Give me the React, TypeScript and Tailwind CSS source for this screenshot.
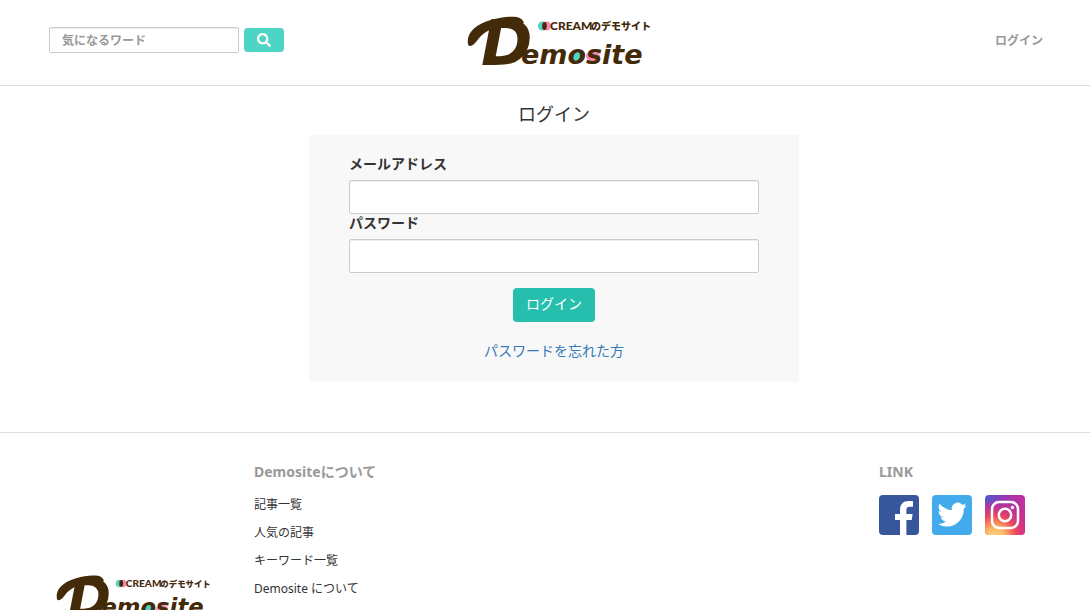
import { useState } from 'react'
import type { FormEvent } from 'react'
import { FaSearch } from 'react-icons/fa'

const aboutLinks = ['記事一覧', '人気の記事', 'キーワード一覧', 'Demosite について']

function Logo({ className }: { className: string }) {
  return (
    <svg viewBox="0 0 183 50" className={className} role="img" aria-label="Demosite" fill="#432a09">
      {/* swash over the initial */}
      <path d="M1 28 C-1 17 9 8 24 4 C33 1 42 0 50 1 C54 2 56 4 57 7 L36 10 C25 12 18 16 14 20 C10 24 7 30 3 30 Q1 30 1 28Z" />
      <text x="14" y="49" fontFamily="'DejaVu Sans', sans-serif" fontSize="62" fontWeight="700" fontStyle="italic">
        D
      </text>
      <ellipse cx="109" cy="40" rx="6" ry="5" fill="#4fd5c5" />
      <ellipse cx="126" cy="40" rx="7" ry="5" fill="#ff85b3" />
      <text x="54" y="48" fontFamily="'DejaVu Sans', sans-serif" fontSize="27" fontWeight="700" fontStyle="italic">
        emosite
      </text>
      <circle cx="75.500" cy="10" r="4.500" fill="#4fd5c5" />
      <circle cx="79.500" cy="10" r="4.500" fill="#ff85b3" />
      <ellipse cx="77.500" cy="10" rx="2.300" ry="4" />
      <text x="83" y="14" fontFamily="Lato, sans-serif" fontSize="12" fontWeight="900">
        CREAM
      </text>
      <text x="124" y="14" fontFamily="'Noto Sans CJK JP', sans-serif" fontSize="10" fontWeight="900">
        のデモサイト
      </text>
    </svg>
  )
}

function FacebookIcon() {
  return (
    <svg viewBox="0 0 40 40" className="size-10">
      <rect width="40" height="40" rx="4" fill="#38569b" />
      <path d="M21 40V25h-5v-6h5v-4c0-6 3.500-9 8.500-9 2 0 3.500.1 4.500.3v5.400h-3.300c-2.700 0-3.300 1.400-3.300 3.400V19h6.200l-.9 6h-5.300v15z" fill="#fff" />
    </svg>
  )
}

function TwitterIcon() {
  return (
    <svg viewBox="0 0 40 40" className="size-10">
      <rect width="40" height="40" rx="4" fill="#43abeb" />
      <g transform="translate(5.500 5) scale(1.220)">
        <path
          d="M23.953 4.570a10 10 0 01-2.825.775 4.958 4.958 0 002.163-2.723c-.951.555-2.005.959-3.127 1.184a4.920 4.920 0 00-8.384 4.482C7.690 8.095 4.067 6.130 1.640 3.162a4.822 4.822 0 00-.666 2.475c0 1.710.87 3.213 2.188 4.096a4.904 4.904 0 01-2.228-.616v.06a4.923 4.923 0 003.946 4.827 4.996 4.996 0 01-2.212.085 4.936 4.936 0 004.604 3.417 9.867 9.867 0 01-6.102 2.105c-.39 0-.779-.023-1.170-.067a13.995 13.995 0 007.557 2.209c9.053 0 13.998-7.496 13.998-13.985 0-.21 0-.42-.015-.63A9.935 9.935 0 0024 4.590z"
          fill="#fff"
        />
      </g>
    </svg>
  )
}

function InstagramIcon() {
  return (
    <svg viewBox="0 0 40 40" className="size-10">
      <defs>
        <linearGradient id="ig-base" x1="0" y1="0" x2="1" y2="0.300">
          <stop offset="0" stopColor="#4f5bd0" />
          <stop offset="0.500" stopColor="#9a37b4" />
          <stop offset="1" stopColor="#c92f96" />
        </linearGradient>
        <radialGradient id="ig-glow" cx="0.250" cy="1.050" r="0.950">
          <stop offset="0" stopColor="#ffd879" />
          <stop offset="0.250" stopColor="#fdb768" />
          <stop offset="0.550" stopColor="#ee4a58" />
          <stop offset="0.800" stopColor="#d33282" stopOpacity="0.700" />
          <stop offset="1" stopColor="#c92f96" stopOpacity="0" />
        </radialGradient>
      </defs>
      <rect width="40" height="40" rx="4" fill="url(#ig-base)" />
      <rect width="40" height="40" rx="4" fill="url(#ig-glow)" />
      <rect x="7" y="7" width="26" height="26" rx="7" fill="none" stroke="#fff" strokeWidth="2.500" />
      <circle cx="20" cy="20" r="6.200" fill="none" stroke="#fff" strokeWidth="2.500" />
      <circle cx="27.500" cy="12.500" r="1.700" fill="#fff" />
    </svg>
  )
}

const socialLinks = [
  { name: 'Facebook', Icon: FacebookIcon },
  { name: 'Twitter', Icon: TwitterIcon },
  { name: 'Instagram', Icon: InstagramIcon },
]

export default function App() {
  const [keyword, setKeyword] = useState('')
  const [email, setEmail] = useState('')
  const [password, setPassword] = useState('')

  const handleSubmit = (e: FormEvent) => {
    e.preventDefault()
  }

  const fieldClass =
    'block w-full h-[34px] px-3 bg-white border border-[#ccc] rounded-xs text-sm shadow-[inset_0_1px_1px_rgba(0,0,0,0.075)] outline-none focus:border-[#66afe9]'

  return (
    <div className="bg-white text-[#333] text-sm font-['Noto_Sans','Noto_Sans_CJK_JP',sans-serif]">
      <header className="grid grid-cols-[1fr_auto_1fr] items-center pl-[49px] pr-[47px] pt-4 pb-[19px] border-b border-[#ddd]">
        <form onSubmit={handleSubmit} className="flex items-center gap-[5px] pb-0.5">
          <input
            type="search"
            aria-label="気になるワード"
            placeholder="気になるワード"
            value={keyword}
            onChange={(e) => setKeyword(e.target.value)}
            className="w-[190px] h-[26px] px-3 bg-white border border-[#ccc] rounded-xs text-xs font-bold placeholder:text-[#999] shadow-[inset_0_1px_1px_rgba(0,0,0,0.075)] outline-none"
          />
          <button
            type="submit"
            aria-label="検索"
            className="flex items-center justify-center w-10 h-6 rounded-sm bg-[#4dd4c4] text-white"
          >
            <FaSearch className="size-3.5" />
          </button>
        </form>
        <a href="#" className="ml-6">
          <Logo className="block w-[183px] overflow-visible" />
        </a>
        <a href="#" className="justify-self-end text-xs font-bold text-[#999]">
          ログイン
        </a>
      </header>

      <main className="pl-[18px] pt-3.5 pb-[50px]">
        <h1 className="mb-[7px] text-center text-lg leading-7">ログイン</h1>
        <form onSubmit={handleSubmit} className="max-w-[490px] mx-auto px-10 pt-[19px] pb-5 bg-[#f8f8f8]">
          <label htmlFor="email" className="block mb-1.5 leading-5 font-bold">
            メールアドレス
          </label>
          <input
            id="email"
            type="email"
            value={email}
            onChange={(e) => setEmail(e.target.value)}
            className={fieldClass}
          />
          <label htmlFor="password" className="block mb-[7px] leading-[18px] font-bold">
            パスワード
          </label>
          <input
            id="password"
            type="password"
            value={password}
            onChange={(e) => setPassword(e.target.value)}
            className={fieldClass}
          />
          <div className="mt-[15px] text-center">
            <button type="submit" className="h-[34px] px-[13px] pb-0.5 rounded-sm bg-[#26bfad] text-white">
              ログイン
            </button>
          </div>
          <p className="mt-[19px] mb-px text-center leading-5">
            <a href="#" className="text-[#337ab7] hover:underline">
              パスワードを忘れた方
            </a>
          </p>
        </form>
      </main>

      <footer className="flex items-start border-t border-[#ddd] pl-14 pr-[65px] pt-[29px]">
        <a href="#" className="mt-[113px]">
          <Logo className="block w-[154px] overflow-visible" />
        </a>
        <section className="ml-11">
          <h2 className="leading-5 font-bold text-[#999]">Demositeについて</h2>
          <ul className="mt-[9px] text-xs">
            {aboutLinks.map((label) => (
              <li key={label} className="leading-7">
                <a href="#" className="hover:underline">
                  {label}
                </a>
              </li>
            ))}
          </ul>
        </section>
        <section className="ml-auto">
          <h2 className="leading-5 font-bold text-[#999]">LINK</h2>
          <div className="mt-[13px] flex gap-[13px]">
            {socialLinks.map(({ name, Icon }) => (
              <a key={name} href="#" aria-label={name}>
                <Icon />
              </a>
            ))}
          </div>
        </section>
      </footer>
    </div>
  )
}
